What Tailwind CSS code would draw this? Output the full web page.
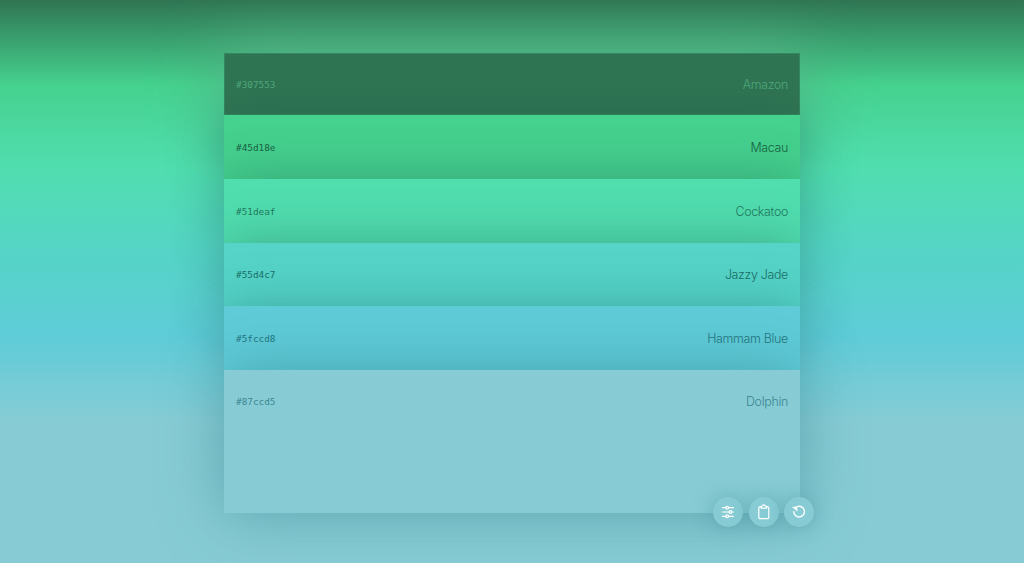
<!DOCTYPE html>
<html lang="en">
  <head>
    <meta charset="UTF-8" />
    <meta name="viewport" content="width=device-width, initial-scale=1.0" />
    <title>Palette</title>
    <script src="https://cdn.jsdelivr.net/npm/@tailwindcss/browser@4"></script>
  </head>

  <body
    class="flex h-screen justify-center overflow-hidden bg-[linear-gradient(#307553_0%,#45d18e_15%,#51deaf_30%,#55d4c7_45%,#5fccd8_60%,#87ccd5_75%)] pt-[52.9px] font-['Inter',sans-serif]"
  >
    <main class="relative isolate flex h-[460.4px] w-[576px] flex-col text-[12.4px] font-light tracking-[-0.3px]">
      <div class="relative flex h-[62.5px] items-center justify-between bg-[#307553] px-3 text-[#52ab7d] shadow-[0_0_66px_#5cb088]">
        <span class="pt-px font-['DejaVu_Sans_Mono',monospace] text-[9.4px] font-normal tracking-normal">#307553</span>
        <span class="pt-[3px]">Amazon</span>
        <div class="absolute inset-0 border border-[#45d18e]/20"></div>
      </div>
      <div class="relative flex h-[63.6px] items-center justify-between bg-[#45d18e] px-3 text-[#17613f] shadow-[0_0_50px_#1d5f5080]">
        <span class="pt-px font-['DejaVu_Sans_Mono',monospace] text-[9.4px] font-normal tracking-normal">#45d18e</span>
        <span class="pt-[3px]">Macau</span>
      </div>
      <div class="relative flex h-[63.6px] items-center justify-between bg-[#51deaf] px-3 text-[#237a5e] shadow-[0_0_50px_#20665a70]">
        <span class="pt-[2px] font-['DejaVu_Sans_Mono',monospace] text-[9.4px] font-normal tracking-normal">#51deaf</span>
        <span class="pt-[3px]">Cockatoo</span>
      </div>
      <div class="relative flex h-[63.6px] items-center justify-between bg-[#55d4c7] px-3 text-[#1a7067] shadow-[0_0_50px_#20665a70]">
        <span class="pt-px font-['DejaVu_Sans_Mono',monospace] text-[9.4px] font-normal tracking-normal">#55d4c7</span>
        <span class="pt-px">Jazzy Jade</span>
      </div>
      <div class="relative flex h-[63.6px] items-center justify-between bg-[#5fccd8] px-3 text-[#24747e] shadow-[0_0_50px_#20666a66]">
        <span class="pt-[2px] font-['DejaVu_Sans_Mono',monospace] text-[9.4px] font-normal tracking-normal">#5fccd8</span>
        <span class="pt-[2px]">Hammam Blue</span>
      </div>
      <div class="relative flex grow items-start justify-between bg-[#87ccd5] px-3 text-[#3a8791] shadow-[0_0_60px_#34808a88]">
        <span class="flex h-[64.5px] items-center pt-px font-['DejaVu_Sans_Mono',monospace] text-[9.4px] font-normal tracking-normal">#87ccd5</span>
        <span class="flex h-[64.5px] items-center pt-px">Dolphin</span>
      </div>

      <!-- toolbar -->
      <div class="absolute -right-[13.8px] -bottom-[13.7px] flex gap-[5.3px] text-white">
        <button class="flex size-[30px] items-center justify-center rounded-full bg-[#87ccd5] shadow-[0_0_20px_#34808a66]">
          <svg class="size-4" viewBox="0 0 16 16" fill="none" stroke="currentColor" stroke-width="1.2" stroke-linecap="round">
            <path d="M2.6 3.7h3M8.8 3.7h4.6M2.6 8h6.2M12 8h1.4M2.6 12.3h3M8.8 12.3h4.6" />
            <circle cx="7.2" cy="3.7" r="1.4" />
            <circle cx="10.4" cy="8" r="1.4" />
            <circle cx="7.2" cy="12.3" r="1.4" />
          </svg>
        </button>
        <button class="flex size-[30px] items-center justify-center rounded-full bg-[#87ccd5] shadow-[0_0_20px_#34808a66]">
          <svg class="size-4" viewBox="0 0 16 16" fill="none" stroke="currentColor" stroke-width="1.2" stroke-linejoin="round">
            <path d="M5.3 2.7H4A1.2 1.2 0 0 0 2.8 3.9v9.6A1.2 1.2 0 0 0 4 14.7h7.6a1.2 1.2 0 0 0 1.2-1.2V3.9a1.2 1.2 0 0 0-1.2-1.2h-1.3" />
            <path d="M5 4.2V2.9c0-.4.3-.6.8-.7.7 0 .8-1.3 2-1.3s1.3 1.3 2 1.3c.5.1.8.3.8.7v1.3z" />
          </svg>
        </button>
        <button class="flex size-[30px] items-center justify-center rounded-full bg-[#87ccd5] shadow-[0_0_20px_#34808a66]">
          <svg class="size-4" viewBox="0 0 16 16" fill="none" stroke="currentColor" stroke-width="1.4" stroke-linecap="round" stroke-linejoin="round">
            <path d="M6.2 2.7A5.3 5.3 0 1 1 2.8 7.6" />
            <path d="M1.9 3.2l3.8-.4.5 3.9z" fill="currentColor" stroke-width=".6" />
          </svg>
        </button>
      </div>
    </main>
  </body>
</html>
